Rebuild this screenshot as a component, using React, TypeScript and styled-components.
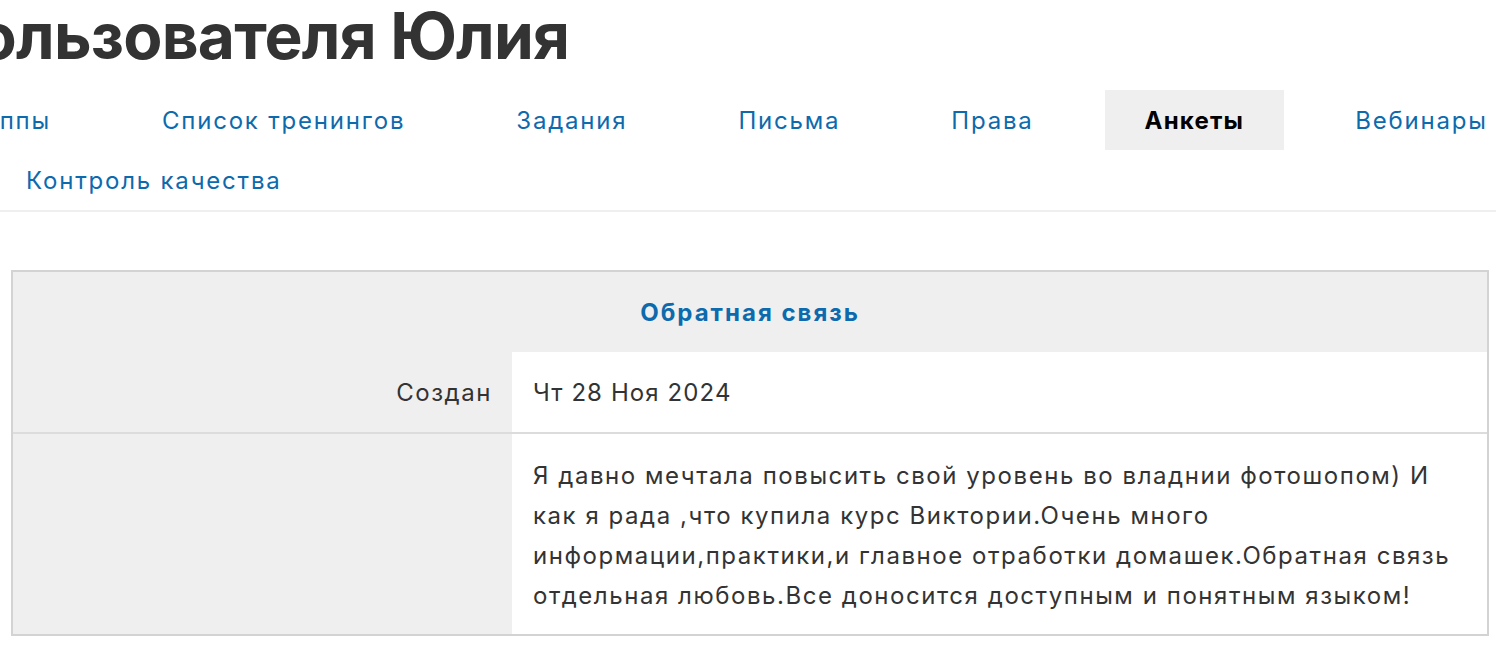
import React from 'react';
import styled, { createGlobalStyle } from 'styled-components';

const GlobalStyle = createGlobalStyle`
  html, body {
    margin: 0;
    padding: 0;
    background: #fff;
  }
  body {
    font-family: Inter, "Noto Sans", "DejaVu Sans", sans-serif;
    color: #333;
  }
`;

const Page = styled.div`
  width: 1496px;
  height: 652px;
  overflow: hidden;
`;

const Title = styled.h1`
  margin: -2px 0 0 -301px;
  font-size: 64px;
  line-height: 76px;
  font-weight: 700;
  letter-spacing: -0.8px;
  color: #333;
  white-space: nowrap;
`;

const Tabs = styled.nav`
  display: flex;
  flex-wrap: wrap;
  column-gap: 31px;
  width: 1620px;
  margin: 16px 0 0 -14px;
  padding: 0;
  border-bottom: 2px solid #efefef;
`;

const Tab = styled.a<{ $active?: boolean; $shift?: number }>`
  display: block;
  box-sizing: border-box;
  height: 60px;
  padding: 2px 40px 0;
  line-height: 58px;
  margin-left: ${(p) => (p.$shift ? `${p.$shift}px` : '0')};
  font-size: 24px;
  letter-spacing: ${(p) => (p.$active ? '1.2px' : '1.8px')};
  font-weight: ${(p) => (p.$active ? 700 : 400)};
  color: ${(p) => (p.$active ? '#000' : '#0d6aad')};
  background: ${(p) => (p.$active ? '#efefef' : 'transparent')};
  text-decoration: none;
  white-space: nowrap;
`;

const Table = styled.section`
  display: grid;
  grid-template-columns: 499px 1fr;
  width: 1478px;
  box-sizing: border-box;
  margin: 58px 0 0 11px;
  border: 2px solid #d3d3d3;
  font-size: 24px;
  letter-spacing: 1.55px;
`;

const Caption = styled.div`
  grid-column: 1 / -1;
  box-sizing: border-box;
  height: 80px;
  padding-top: 2px;
  line-height: 78px;
  text-align: center;
  background: #efefef;
  font-weight: 700;
  letter-spacing: 2px;
  color: #0d6aad;
`;

const Label = styled.div<{ $divider?: boolean }>`
  background: #efefef;
  text-align: right;
  padding: 2px 20px 0;
  line-height: 78px;
  color: #333;
  border-top: ${(p) => (p.$divider ? '2px solid #dcdcdc' : 'none')};
`;

const Value = styled.div<{ $divider?: boolean; $long?: boolean }>`
  background: #fff;
  padding: ${(p) => (p.$long ? '22px 21px 18px' : '2px 21px 0')};
  line-height: ${(p) => (p.$long ? '40px' : '78px')};
  letter-spacing: ${(p) => (p.$long ? '1.55px' : '1.1px')};
  color: #333;
  border-top: ${(p) => (p.$divider ? '2px solid #dcdcdc' : 'none')};
`;

const tabs = [
  'Группы',
  'Список тренингов',
  'Задания',
  'Письма',
  'Права',
  'Анкеты',
  'Вебинары',
  'Контроль качества',
];

const App: React.FC = () => {
  return (
    <Page>
      <GlobalStyle />
      <Title>Анкета пользователя Юлия</Title>
      <Tabs>
        {tabs.map((t, i) => (
          <Tab key={t} href="#" $active={t === 'Анкеты'} $shift={i === 0 ? -72 : 0}>
            {t}
          </Tab>
        ))}
      </Tabs>
      <Table>
        <Caption>Обратная связь</Caption>
        <Label>Создан</Label>
        <Value>Чт 28 Ноя 2024</Value>
        <Label $divider />
        <Value $divider $long>
          Я давно мечтала повысить свой уровень во владнии фотошопом) И как я рада ,что купила
          курс Виктории.Очень много информации,практики,и главное отработки домашек.Обратная
          связь отдельная любовь.Все доносится доступным и понятным языком!
        </Value>
      </Table>
    </Page>
  );
};

export default App;
